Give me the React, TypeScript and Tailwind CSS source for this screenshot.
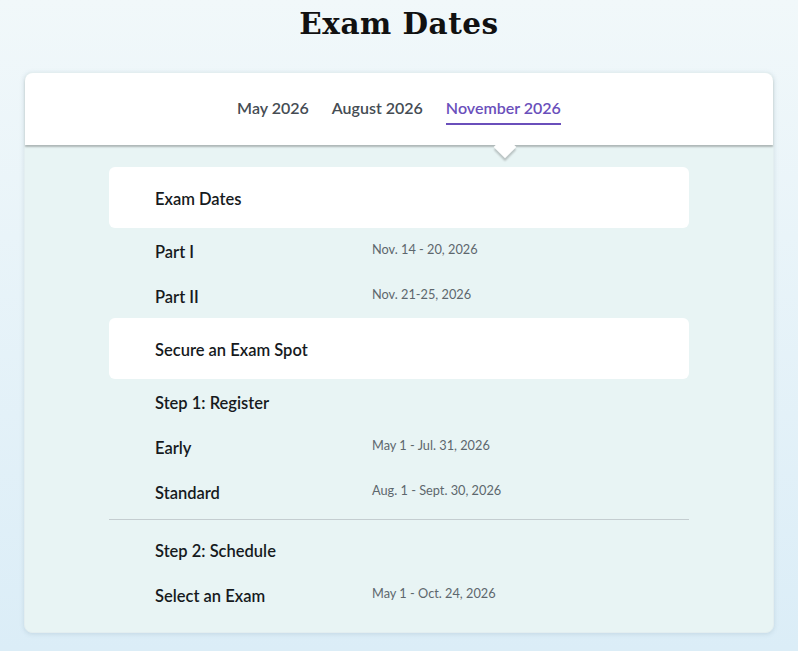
const tabs = ['May 2026', 'August 2026', 'November 2026'];

function Row({ label, date }: { label: string; date?: string }) {
  return (
    <div className="flex items-center h-[45px] pl-[46px]">
      <span className="w-[217px] shrink-0 mt-[3px] text-[16.5px] font-semibold text-[#161a1d]">{label}</span>
      {date && <span className="text-[12.75px] text-[#5d676d] -mt-[1px]">{date}</span>}
    </div>
  );
}

function Heading({ children }: { children: string }) {
  return (
    <div className="flex items-center h-[61px] pl-[46px] bg-white rounded-[6px] text-[16.5px] font-semibold text-[#161a1d]">
      <span className="mt-[3px]">{children}</span>
    </div>
  );
}

export default function App() {
  return (
    <div
      className="min-h-[651px] w-full bg-gradient-to-b from-[#f1f8fa] to-[#dbedf7] flex flex-col items-center pt-[2px]"
      style={{ fontFamily: 'Lato, "Noto Sans", sans-serif' }}
    >
      <h1
        className="text-[29.5px] font-bold text-[#111] leading-[44px] tracking-[0.5px]"
        style={{ fontFamily: '"DejaVu Serif", "Liberation Serif", serif' }}
      >
        Exam Dates
      </h1>
      <div className="mt-[26px] w-[750px] rounded-[8px] bg-[#e8f4f4] shadow-[0_1px_4px_rgba(120,150,170,0.25)] border border-[#e3eef0]">
        <div className="relative h-[72px] bg-white rounded-t-[8px] shadow-[0_2px_2px_rgba(0,0,0,0.25)] flex justify-center items-start gap-[23px] pt-[25px] z-10">
          {tabs.map((t, i) => (
            <div
              key={t}
              className={
                i === 2
                  ? 'text-[16px] font-semibold text-[#6a4fbb] border-b-2 border-[#6a4fbb] pb-[5px] leading-[20px]'
                  : 'text-[16px] font-semibold text-[#454c53] leading-[20px]'
              }
            >
              {t}
            </div>
          ))}
          <div className="absolute left-[472px] top-[66px] w-[16px] h-[16px] bg-white rotate-45 shadow-[2px_2px_2px_rgba(0,0,0,0.2)]" />
        </div>
        <div className="px-[84px] pt-[22px] pb-[15px]">
          <Heading>Exam Dates</Heading>
          <Row label="Part I" date="Nov. 14 - 20, 2026" />
          <Row label="Part II" date="Nov. 21-25, 2026" />
          <Heading>Secure an Exam Spot</Heading>
          <Row label="Step 1: Register" />
          <Row label="Early" date="May 1 - Jul. 31, 2026" />
          <Row label="Standard" date="Aug. 1 - Sept. 30, 2026" />
          <div className="mt-[5px] mb-[7px] border-t border-[#c4cdd0]" />
          <Row label="Step 2: Schedule" />
          <Row label="Select an Exam" date="May 1 - Oct. 24, 2026" />
        </div>
      </div>
    </div>
  );
}
